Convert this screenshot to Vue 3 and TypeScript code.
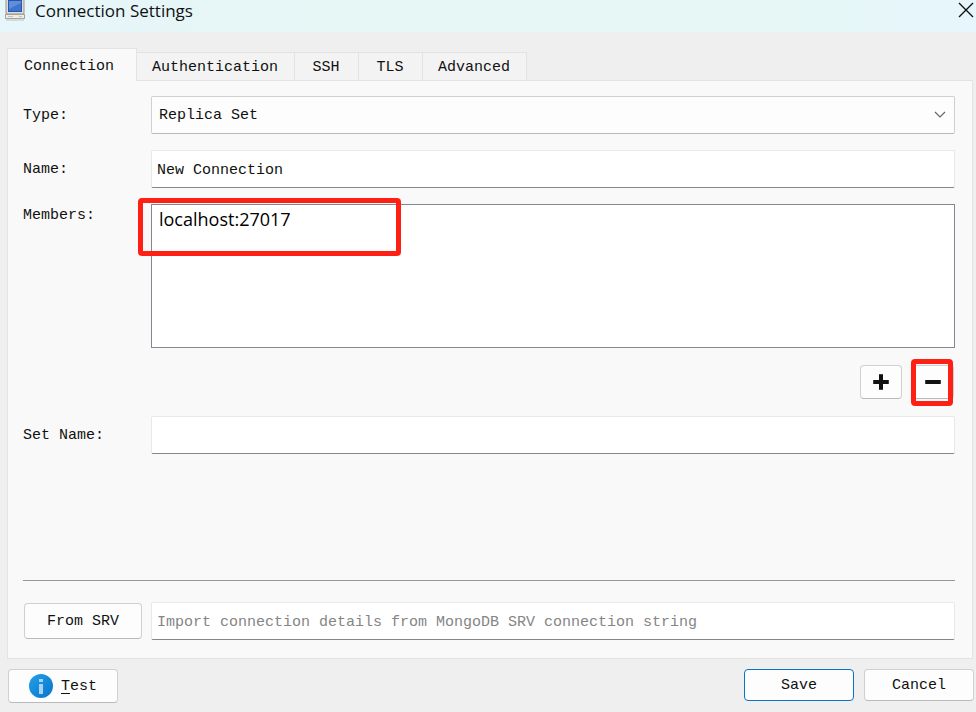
<script setup lang="ts">
import { ref } from 'vue'

interface Tab {
  id: string
  label: string
}

const tabs: Tab[] = [
  { id: 'connection', label: 'Connection' },
  { id: 'authentication', label: 'Authentication' },
  { id: 'ssh', label: 'SSH' },
  { id: 'tls', label: 'TLS' },
  { id: 'advanced', label: 'Advanced' },
]

const activeTab = ref<string>('connection')
const connectionType = ref<string>('Replica Set')
const connectionName = ref<string>('New Connection')
const members = ref<string[]>(['localhost:27017'])
const setName = ref<string>('')
const srv = ref<string>('')

function addMember(): void {
  members.value.push('localhost:27017')
}

function removeMember(): void {
  members.value.pop()
}
</script>

<template>
  <div class="dialog">
    <header class="titlebar">
      <svg class="app-icon" width="20" height="21" viewBox="0 0 20 21" aria-hidden="true">
        <rect x="1" y="-3" width="18" height="17" rx="1" fill="#dedcd7" stroke="#969490" />
        <rect x="3" y="0" width="14" height="12" fill="#2a55ad" />
        <rect x="4" y="1" width="12" height="10" fill="#3f74cc" />
        <path d="M4 1h12v2L4 9z" fill="#5f8fda" />
        <rect x="0.500" y="14.500" width="19" height="4" fill="#eeece8" stroke="#a5a39e" />
        <path d="M3 16.500h5M14 16.500h3" stroke="#c5c2bc" />
        <path d="M1 20h18" stroke="#b8c4c6" stroke-width="1" />
      </svg>
      <h1>Connection Settings</h1>
      <button class="close" type="button" aria-label="Close">
        <svg width="16" height="16" viewBox="0 0 16 16" aria-hidden="true">
          <path d="M1 1l14 14M15 1L1 15" stroke="#111" stroke-width="1.400" fill="none" />
        </svg>
      </button>
    </header>

    <main class="body">
      <div class="tabs" role="tablist">
        <button
          v-for="tab in tabs"
          :key="tab.id"
          type="button"
          role="tab"
          class="tab"
          :class="{ active: tab.id === activeTab }"
          :aria-selected="tab.id === activeTab"
          @click="activeTab = tab.id"
        >{{ tab.label }}</button>
      </div>

      <section class="panel" role="tabpanel">
        <div class="row">
          <label class="caption" for="type">Type:</label>
          <div class="select-wrap">
            <select id="type" v-model="connectionType" class="field combo">
              <option>Replica Set</option>
            </select>
            <svg class="chevron" width="12" height="8" viewBox="0 0 12 8" aria-hidden="true">
              <path d="M1 1l5 5 5-5" fill="none" stroke="#666" stroke-width="1.200" />
            </svg>
          </div>
        </div>

        <div class="row">
          <label class="caption" for="name">Name:</label>
          <input id="name" v-model="connectionName" class="field" type="text" />
        </div>

        <div class="row members-row">
          <span id="members-label" class="caption">Members:</span>
          <div class="members">
            <ul role="listbox" aria-labelledby="members-label">
              <li v-for="(member, index) in members" :key="index" role="option">{{ member }}</li>
            </ul>
            <span class="highlight members-highlight"></span>
          </div>
        </div>

        <div class="member-actions">
          <button class="btn square" type="button" aria-label="Add" @click="addMember">
            <svg width="16" height="16" viewBox="0 0 16 16" aria-hidden="true">
              <path d="M0 8h16M8 0v16" stroke="#444" stroke-width="4" />
              <path d="M1 8h14M8 1v14" stroke="#111" stroke-width="4" />
            </svg>
          </button>
          <div class="remove">
            <button class="btn square" type="button" aria-label="Remove" @click="removeMember">
              <svg width="16" height="16" viewBox="0 0 16 16" aria-hidden="true">
                <path d="M0 8h16" stroke="#444" stroke-width="4" />
                <path d="M1 8h14" stroke="#111" stroke-width="4" />
              </svg>
            </button>
            <span class="highlight remove-highlight"></span>
          </div>
        </div>

        <div class="row">
          <label class="caption" for="set-name">Set Name:</label>
          <input id="set-name" v-model="setName" class="field" type="text" />
        </div>

        <div class="srv">
          <div class="row">
            <button class="btn from-srv" type="button">From SRV</button>
            <input
              v-model="srv"
              class="field"
              type="text"
              aria-label="SRV connection string"
              placeholder="Import connection details from MongoDB SRV connection string"
            />
          </div>
        </div>
      </section>
    </main>

    <footer class="footer">
      <button class="btn test" type="button">
        <svg width="24" height="24" viewBox="0 0 24 24" aria-hidden="true">
          <defs>
            <linearGradient id="info-fill" x1="0" y1="0" x2="1" y2="1">
              <stop offset="0" stop-color="#23a1e6" />
              <stop offset="1" stop-color="#0873cd" />
            </linearGradient>
          </defs>
          <circle cx="12" cy="12" r="12" fill="url(#info-fill)" />
          <path d="M10 5h4v3h-4zM10 10h4v10h-4z" fill="#a6d3f3" />
        </svg>
        <span class="btn-text"><u>T</u>est</span>
      </button>
      <div class="confirm">
        <button class="btn primary" type="button"><span class="btn-text">Save</span></button>
        <button class="btn" type="button"><span class="btn-text">Cancel</span></button>
      </div>
    </footer>
  </div>
</template>

<style>
body {
  background: #efefef;
}
</style>

<style scoped>
.dialog,
.dialog * {
  box-sizing: border-box;
}

.dialog {
  display: flex;
  flex-direction: column;
  min-height: 100vh;
  background: #efefef;
  color: #111;
  font: 15px/20px "Liberation Mono", monospace;
}

button,
input,
select {
  margin: 0;
  color: inherit;
  font: inherit;
}

svg {
  display: block;
}

.titlebar {
  display: flex;
  align-items: flex-start;
  height: 32px;
  padding: 0 2px 0 5px;
  background: linear-gradient(90deg, #e6f6fa, #e7f7f6 35%, #e6f7f6 80%, #e6f6fc);
}

h1 {
  flex: 1;
  margin: 0 0 0 10px;
  font: 400 17px/22px "Open Sans", "Noto Sans", sans-serif;
}

.close {
  padding: 2px 0 0;
  border: 0;
  background: none;
}

.body {
  display: flex;
  flex: 1;
  flex-direction: column;
  padding: 16px 3px 0 7px;
}

.tabs {
  display: flex;
  align-items: flex-end;
}

.tab {
  min-width: 64px;
  height: 28px;
  padding: 2px 16px 0 15px;
  border: 1px solid #e3e3e3;
  border-width: 1px 1px 0 0;
  background: #f3f3f3;
}

.tab.active {
  position: relative;
  height: 33px;
  margin-bottom: -1px;
  padding: 3px 22px 0 16px;
  border-left-width: 1px;
  background: #f9f9f9;
}

.panel {
  display: flex;
  flex: 1;
  flex-direction: column;
  gap: 16px;
  padding: 15px 17px 18px 15px;
  border: 1px solid #e3e3e3;
  background: #f9f9f9;
}

.row {
  display: grid;
  grid-template-columns: 128px minmax(0, 1fr);
  align-items: center;
}

.members-row {
  align-items: start;
}

.caption,
.btn-text {
  padding-top: 2px;
}

.field {
  width: 100%;
  height: 38px;
  padding: 2px 5px 0;
  border: 1px solid #e8e8e8;
  border-bottom-color: #868686;
  border-radius: 2px;
  background: #fff;
  outline: 0;
}

.field::placeholder {
  color: #858585;
  opacity: 1;
}

.select-wrap {
  position: relative;
}

.combo {
  display: block;
  padding: 2px 30px 0 7px;
  border-color: #d0d0d0;
  border-bottom-color: #bababa;
  background: #fdfdfd;
  appearance: none;
}

.chevron {
  position: absolute;
  top: 15px;
  right: 9px;
  pointer-events: none;
}

.members {
  position: relative;
}

.members ul {
  min-height: 144px;
  margin: 0;
  padding: 3px 7px;
  border: 1px solid #828790;
  background: #fff;
  color: #000;
  list-style: none;
  font: 18px/22px "Open Sans", "Noto Sans", sans-serif;
}

.highlight {
  position: absolute;
  border: 5px solid #ff2015;
  border-radius: 4px;
  pointer-events: none;
}

.members-highlight {
  top: -6px;
  left: -13px;
  width: 263px;
  height: 58px;
}

.remove {
  position: relative;
}

.remove-highlight {
  top: -6px;
  left: -1px;
  width: 42px;
  height: 47px;
}

.member-actions {
  display: flex;
  justify-content: flex-end;
  gap: 10px;
  padding: 1px;
}

.btn {
  display: flex;
  align-items: center;
  justify-content: center;
  width: 110px;
  height: 32px;
  padding: 0;
  border: 1px solid #d0d0d0;
  border-bottom-color: #bababa;
  border-radius: 4px;
  background: #fdfdfd;
}

.square {
  width: 42px;
  height: 34px;
}

.from-srv {
  width: 118px;
  height: 36px;
  margin-left: 1px;
  padding-top: 2px;
}

.srv {
  margin-top: auto;
  padding-top: 21px;
  border-top: 1px solid #999;
}

.footer {
  display: flex;
  align-items: flex-start;
  justify-content: space-between;
  padding: 10px 2px 9px 8px;
}

.test {
  gap: 8px;
  height: 34px;
}

.test u {
  text-underline-offset: 3px;
}

.confirm {
  display: flex;
  gap: 10px;
}

.primary {
  border-color: #0874c8;
}
</style>
